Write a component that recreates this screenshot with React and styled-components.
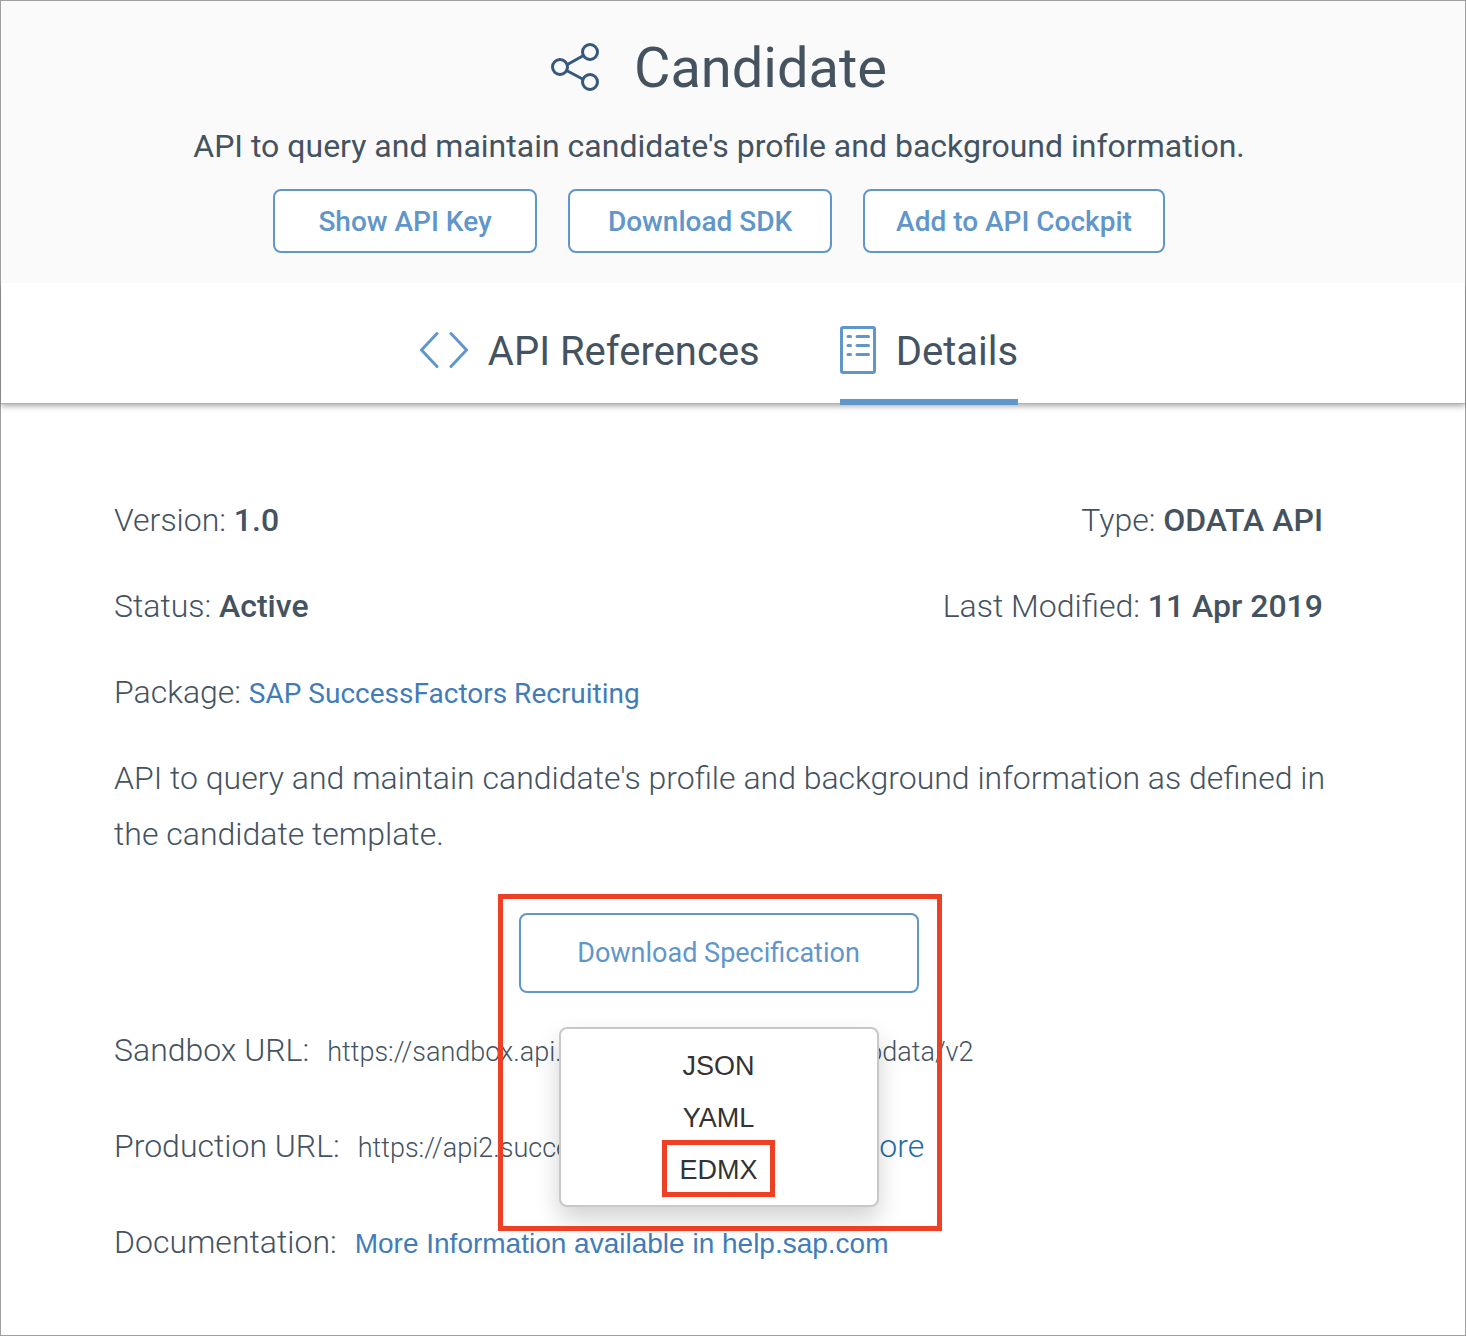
import React from "react";
import styled, { createGlobalStyle } from "styled-components";

const ink = "#44535f";
const blue = "#6196cb";
const red = "#ee4025";

const GlobalStyle = createGlobalStyle`
  *, *::before, *::after { box-sizing: border-box; }
  body {
    margin: 0;
    background: #fff;
    color: ${ink};
    font-family: Roboto, "Liberation Sans", Arial, sans-serif;
  }
`;

const Page = styled.div`
  min-height: 100vh;
  border: 1px solid #a0a0a0;
`;

const Hero = styled.header`
  position: relative;
  z-index: 1;
  display: flex;
  flex-direction: column;
  align-items: center;
  padding: 35px 28px 30px 0;
  background: #fafafa;
`;

const TitleRow = styled.div`
  display: flex;
  align-items: center;
  gap: 35px;
`;

const Title = styled.h1`
  margin: 0;
  font-size: 56px;
  line-height: 64px;
  font-weight: 400;
`;

const Subtitle = styled.p`
  margin: 26px 0 23px;
  font-size: 32px;
  line-height: 40px;
`;

const Actions = styled.div`
  display: flex;
  gap: 31px;
`;

const OutlineButton = styled.button`
  min-width: ${(p) => (p.$large ? 400 : 264)}px;
  height: ${(p) => (p.$large ? 80 : 64)}px;
  padding: 0 31px;
  border: 2px solid ${blue};
  border-radius: 8px;
  background: #fff;
  color: ${blue};
  font-family: inherit;
  font-size: ${(p) => (p.$large ? 27 : 28)}px;
  font-weight: ${(p) => (p.$large ? 400 : 500)};
  cursor: pointer;
`;

const Tabs = styled.nav`
  position: relative;
  display: flex;
  justify-content: center;
  gap: 80px;
  height: 121px;
  padding: 0 28px 0 0;
  border-bottom: 1px solid #b2b2b2;
  background: #fff;
  box-shadow: 0 2px 6px rgba(0, 0, 0, 0.35);
`;

const Tab = styled.a`
  display: flex;
  align-items: center;
  gap: 20px;
  height: 122px;
  padding: 20px 0 0;
  border-bottom: 6px solid ${(p) => (p.$active ? blue : "transparent")};
  color: ${ink};
  font-size: 40px;
  text-decoration: none;
`;

const Main = styled.main`
  padding: 88px 142px 64px 113px;
  font-size: 32px;
  line-height: 56px;
  font-weight: 300;
`;

const Facts = styled.div`
  display: flex;
  flex-direction: column;
  gap: 30px;
`;

const Row = styled.div`
  display: flex;
  justify-content: space-between;
`;

const Value = styled.strong`
  font-weight: 500;
`;

const Description = styled.p`
  margin: 0 -16px 0 0;
`;

const TextLink = styled.a`
  color: ${(p) => (p.$deep ? "#1f6cab" : "#427cb8")};
  font-size: ${(p) => (p.$deep ? 32 : 28)}px;
  line-height: 1;
  font-weight: ${(p) => (p.$deep ? 300 : 400)};
  font-family: ${(p) => (p.$plain ? '"Liberation Sans", Arial, sans-serif' : "inherit")};
  text-decoration: none;
`;

const Download = styled.div`
  position: relative;
  z-index: 1;
  width: 400px;
  margin: 51px auto 29px;
  display: flex;
`;

const Menu = styled.ul`
  position: absolute;
  top: 114px;
  left: 40px;
  width: 320px;
  height: 180px;
  margin: 0;
  padding: 11px 0;
  list-style: none;
  border: 2px solid #c8c8c8;
  border-radius: 8px;
  background: #fff;
  box-shadow: 0 12px 24px rgba(0, 0, 0, 0.18);
`;

const MenuItem = styled.li`
  position: relative;
  display: flex;
  justify-content: center;
  height: 52px;
`;

const MenuButton = styled.button`
  padding: 0;
  border: 0;
  background: none;
  color: #333;
  font-family: "Liberation Sans", Arial, sans-serif;
  font-size: 27px;
  cursor: pointer;
`;

const Callout = styled.span`
  position: absolute;
  top: -19px;
  left: -21px;
  width: 444px;
  height: 337px;
  border: 5px solid ${red};
  pointer-events: none;
`;

const ItemCallout = styled(Callout)`
  top: -4px;
  left: 101px;
  width: 113px;
  height: 57px;
`;

const Links = styled.div`
  display: flex;
  flex-direction: column;
  gap: 40px;
`;

const LinkRow = styled.div`
  display: flex;
  align-items: baseline;
  gap: 18px;
`;

const Url = styled.span`
  font-size: 27px;
  line-height: 1;
`;

const ShareIcon = () => (
  <svg width="48" height="50" viewBox="0 0 48 50" fill="none" stroke="#34597d" strokeWidth="3" aria-hidden="true">
    <circle cx="9" cy="24" r="7.5" />
    <circle cx="39" cy="9" r="7.5" />
    <circle cx="39" cy="39" r="7.5" />
    <path d="M15.5 22 32.5 12.5M15.5 27.5 32.5 36.5" />
  </svg>
);

const CodeIcon = () => (
  <svg width="48" height="48" viewBox="0 1 48 48" fill="none" stroke={blue} strokeWidth="3" strokeLinecap="round" strokeLinejoin="round" aria-hidden="true">
    <path d="M17 7.5 1.5 24 17 40.5M31 7.5 46.5 24 31 40.5" />
  </svg>
);

const DocumentIcon = () => (
  <svg width="36" height="50" viewBox="0 0 36 50" fill="none" stroke={blue} strokeWidth="3" strokeLinecap="round" aria-hidden="true">
    <rect x="1.5" y="1.5" width="33" height="45" rx="1.5" />
    <path d="M8 10.5h2.5M17 10.5h11.5M8 19.5h2.5M17 19.5h11.5M8 28.5h2.5M17 28.5h11.5" />
  </svg>
);

const Fact = ({ label, children }) => (
  <span>
    {label}: <Value>{children}</Value>
  </span>
);

export default function App() {
  return (
    <Page>
      <GlobalStyle />
      <Hero>
        <TitleRow>
          <ShareIcon />
          <Title>Candidate</Title>
        </TitleRow>
        <Subtitle>API to query and maintain candidate's profile and background information.</Subtitle>
        <Actions>
          <OutlineButton type="button">Show API Key</OutlineButton>
          <OutlineButton type="button">Download SDK</OutlineButton>
          <OutlineButton type="button">Add to API Cockpit</OutlineButton>
        </Actions>
      </Hero>
      <Tabs>
        <Tab href="#references">
          <CodeIcon />
          API References
        </Tab>
        <Tab href="#details" $active aria-current="page">
          <DocumentIcon />
          Details
        </Tab>
      </Tabs>
      <Main>
        <Facts>
          <Row>
            <Fact label="Version">1.0</Fact>
            <Fact label="Type">ODATA API</Fact>
          </Row>
          <Row>
            <Fact label="Status">Active</Fact>
            <Fact label="Last Modified">11 Apr 2019</Fact>
          </Row>
          <div>
            Package: <TextLink href="#package">SAP SuccessFactors Recruiting</TextLink>
          </div>
          <Description>
            API to query and maintain candidate's profile and background information as defined in the candidate
            template.
          </Description>
        </Facts>
        <Download>
          <OutlineButton type="button" $large aria-haspopup="true" aria-expanded="true">
            Download Specification
          </OutlineButton>
          <Menu>
            <MenuItem>
              <MenuButton type="button">JSON</MenuButton>
            </MenuItem>
            <MenuItem>
              <MenuButton type="button">YAML</MenuButton>
            </MenuItem>
            <MenuItem>
              <MenuButton type="button">EDMX</MenuButton>
              <ItemCallout />
            </MenuItem>
          </Menu>
          <Callout />
        </Download>
        <Links>
          <LinkRow>
            <span>Sandbox URL:</span>
            <Url>https://sandbox.api.sap.com/successfactors/odata/v2</Url>
          </LinkRow>
          <LinkRow>
            <span>Production URL:</span>
            <Url>https://api2.successfactors.eu/odata/v2</Url>
            <TextLink href="#more" $deep>More</TextLink>
          </LinkRow>
          <LinkRow>
            <span>Documentation:</span>
            <TextLink href="#help" $plain>More Information available in help.sap.com</TextLink>
          </LinkRow>
        </Links>
      </Main>
    </Page>
  );
}
